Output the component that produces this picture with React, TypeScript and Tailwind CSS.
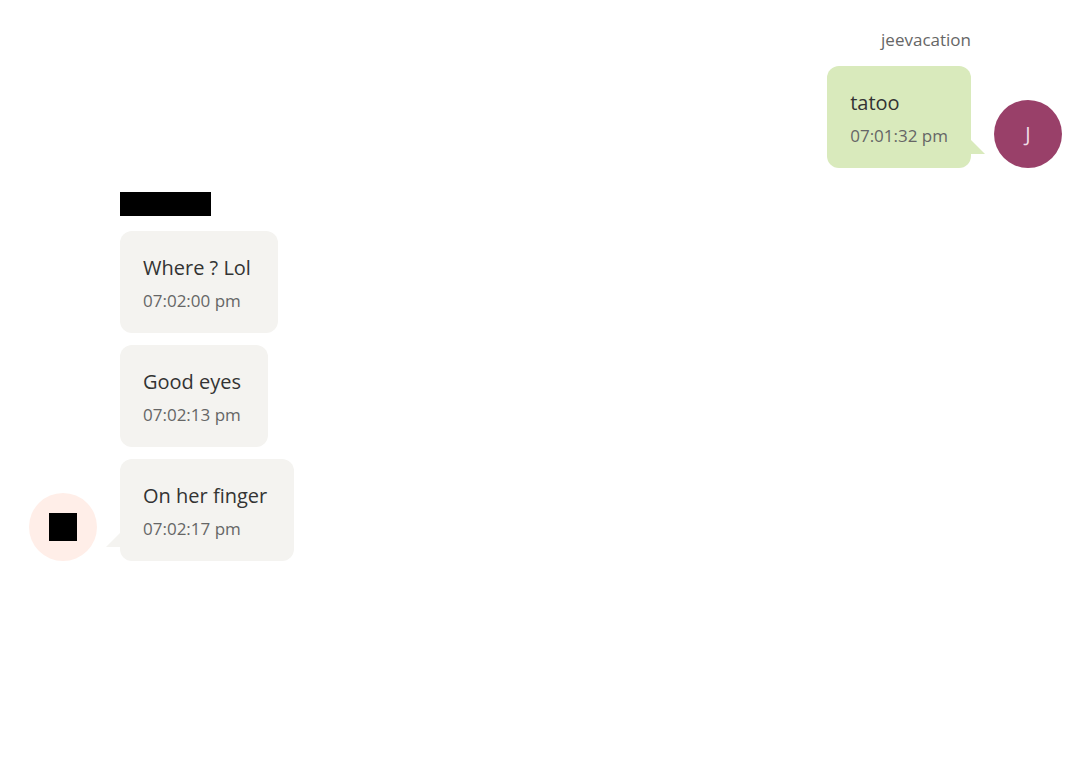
type Message = { text: string; time: string };

const incoming: Message[] = [
  { text: "Where ? Lol", time: "07:02:00 pm" },
  { text: "Good eyes", time: "07:02:13 pm" },
  { text: "On her finger", time: "07:02:17 pm" },
];

function Bubble({ message, outgoing = false, tail = false }: { message: Message; outgoing?: boolean; tail?: boolean }) {
  return (
    <div className={`relative rounded-xl pt-[21px] pb-[17px] ${outgoing ? "bg-[#d9eabc] px-[23px]" : "bg-[#f4f3f0] pr-[27px] pl-[23px]"}`}>
      <p className="text-xl leading-8 text-[#333333]">{message.text}</p>
      <p className="mt-0.5 text-[17px] leading-[30px] text-[#666666]">{message.time}</p>
      {tail && (
        <svg
          className={`absolute bottom-3.5 h-3.5 w-3.5 ${outgoing ? "-right-3.5 text-[#d9eabc]" : "-left-3.5 -scale-x-100 text-[#f4f3f0]"}`}
          viewBox="0 0 14 14"
          aria-hidden="true"
        >
          <path d="M0 0L14 14H0Z" fill="currentColor" />
        </svg>
      )}
    </div>
  );
}

export default function App() {
  return (
    <main className="min-h-screen bg-white pt-[26px] pr-[18px] pb-8 pl-[29px] font-['Open_Sans',sans-serif]">
      <section className="flex items-end justify-end gap-[23px]">
        <div className="flex flex-col items-end">
          <h2 className="mb-3 text-[17px] leading-7 text-[#666666]">jeevacation</h2>
          <Bubble message={{ text: "tatoo", time: "07:01:32 pm" }} outgoing tail />
        </div>
        <div className="flex size-[68px] items-center justify-center rounded-full bg-[#994069] text-xl text-[#f0dce6]">J</div>
      </section>
      <section className="mt-6 flex items-end gap-[23px]">
        <div className="flex size-[68px] items-center justify-center rounded-full bg-[#ffeee8]">
          <div className="size-7 bg-black" />
        </div>
        <div className="flex flex-col items-start">
          <div className="mb-[15px] h-6 w-[91px] bg-black" />
          <div className="flex flex-col items-start gap-3">
            {incoming.map((message, index) => (
              <Bubble key={message.time} message={message} tail={index === incoming.length - 1} />
            ))}
          </div>
        </div>
      </section>
    </main>
  );
}
